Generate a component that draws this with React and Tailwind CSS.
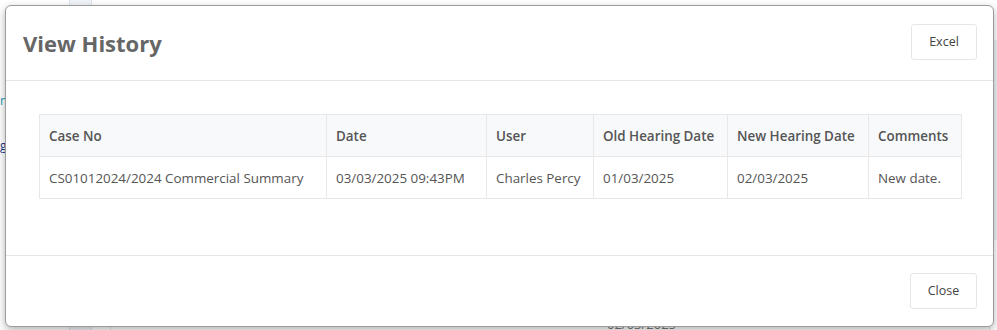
import React from "react";

const cols = [
  { h: "Case No", v: "CS01012024/2024 Commercial Summary", w: "w-[287px]" },
  { h: "Date", v: "03/03/2025 09:43PM", w: "w-[160px]" },
  { h: "User", v: "Charles Percy", w: "w-[107px]" },
  { h: "Old Hearing Date", v: "01/03/2025", w: "w-[134px]" },
  { h: "New Hearing Date", v: "02/03/2025", w: "w-[141px]" },
  { h: "Comments", v: "New date.", w: "w-[93px]" },
];

export default function App() {
  return (
    <div className="relative w-[997px] h-[330px] overflow-hidden bg-white font-['Open_Sans',sans-serif]">
      {/* faint page behind the dialog */}
      <div className="absolute left-[69px] top-0 h-[6px] w-[23px] border-x border-[#dde3ea] bg-[#f1f4f8]" />
      <div className="absolute left-0 top-[95px] text-[12px] leading-none text-[#17a2b8]">n</div>
      <div className="absolute left-0 top-[140px] text-[12px] leading-none text-[#1a3a8a]">g</div>
      <div className="absolute left-[69px] top-[326px] h-[4px] w-[23px] border-x border-[#dde3ea] bg-[#f1f4f8]" />
      <div className="absolute left-[110px] top-[326px] h-[4px] w-[880px] border-x border-[#e6e6e6]" />
      <div className="absolute left-[607px] top-[318px] text-[13px] leading-none text-[#777]">02/03/2025</div>
      <div className="absolute right-0 top-[40px] h-[200px] w-[4px] bg-[#eef2f6]" />

      {/* dialog */}
      <div className="absolute left-[5px] top-[5px] w-[989px] h-[322px] flex flex-col rounded-[6px] border border-[#9c9c9c] bg-white shadow-[0_3px_9px_rgba(0,0,0,0.3)]">
        <div className="flex h-[75px] items-center justify-between border-b border-[#e5e5e5] pl-[17px] pr-[16px]">
          <h4 className="text-[22px] font-bold text-[#666] leading-none mt-[-1px]">View History</h4>
          <button className="h-[36px] w-[66px] rounded-[3px] border border-[#e6e6e6] bg-white text-[12.5px] text-[#444] mt-[-2px]">
            Excel
          </button>
        </div>
        <div className="flex-1 border-b border-[#e5e5e5] pl-[33px] pt-[33px]">
          <table className="table-fixed border-collapse text-[13.4px] text-[#555]">
            <thead>
              <tr className="bg-[#f8f9fa]">
                {cols.map((c) => (
                  <th
                    key={c.h}
                    className={`${c.w} h-[42px] border border-[#e8e8e8] px-[9px] pt-[1px] text-left font-semibold text-[#555] whitespace-nowrap`}
                  >
                    {c.h}
                  </th>
                ))}
              </tr>
            </thead>
            <tbody>
              <tr>
                {cols.map((c) => (
                  <td key={c.h} className="h-[42px] border border-[#e8e8e8] px-[9px] pt-[1px] text-left whitespace-nowrap">
                    {c.v}
                  </td>
                ))}
              </tr>
            </tbody>
          </table>
        </div>
        <div className="flex h-[70px] items-center justify-end pr-[16px]">
          <button className="h-[36px] w-[67px] rounded-[3px] border border-[#e6e6e6] bg-white text-[12.5px] text-[#444]">
            Close
          </button>
        </div>
      </div>
    </div>
  );
}
